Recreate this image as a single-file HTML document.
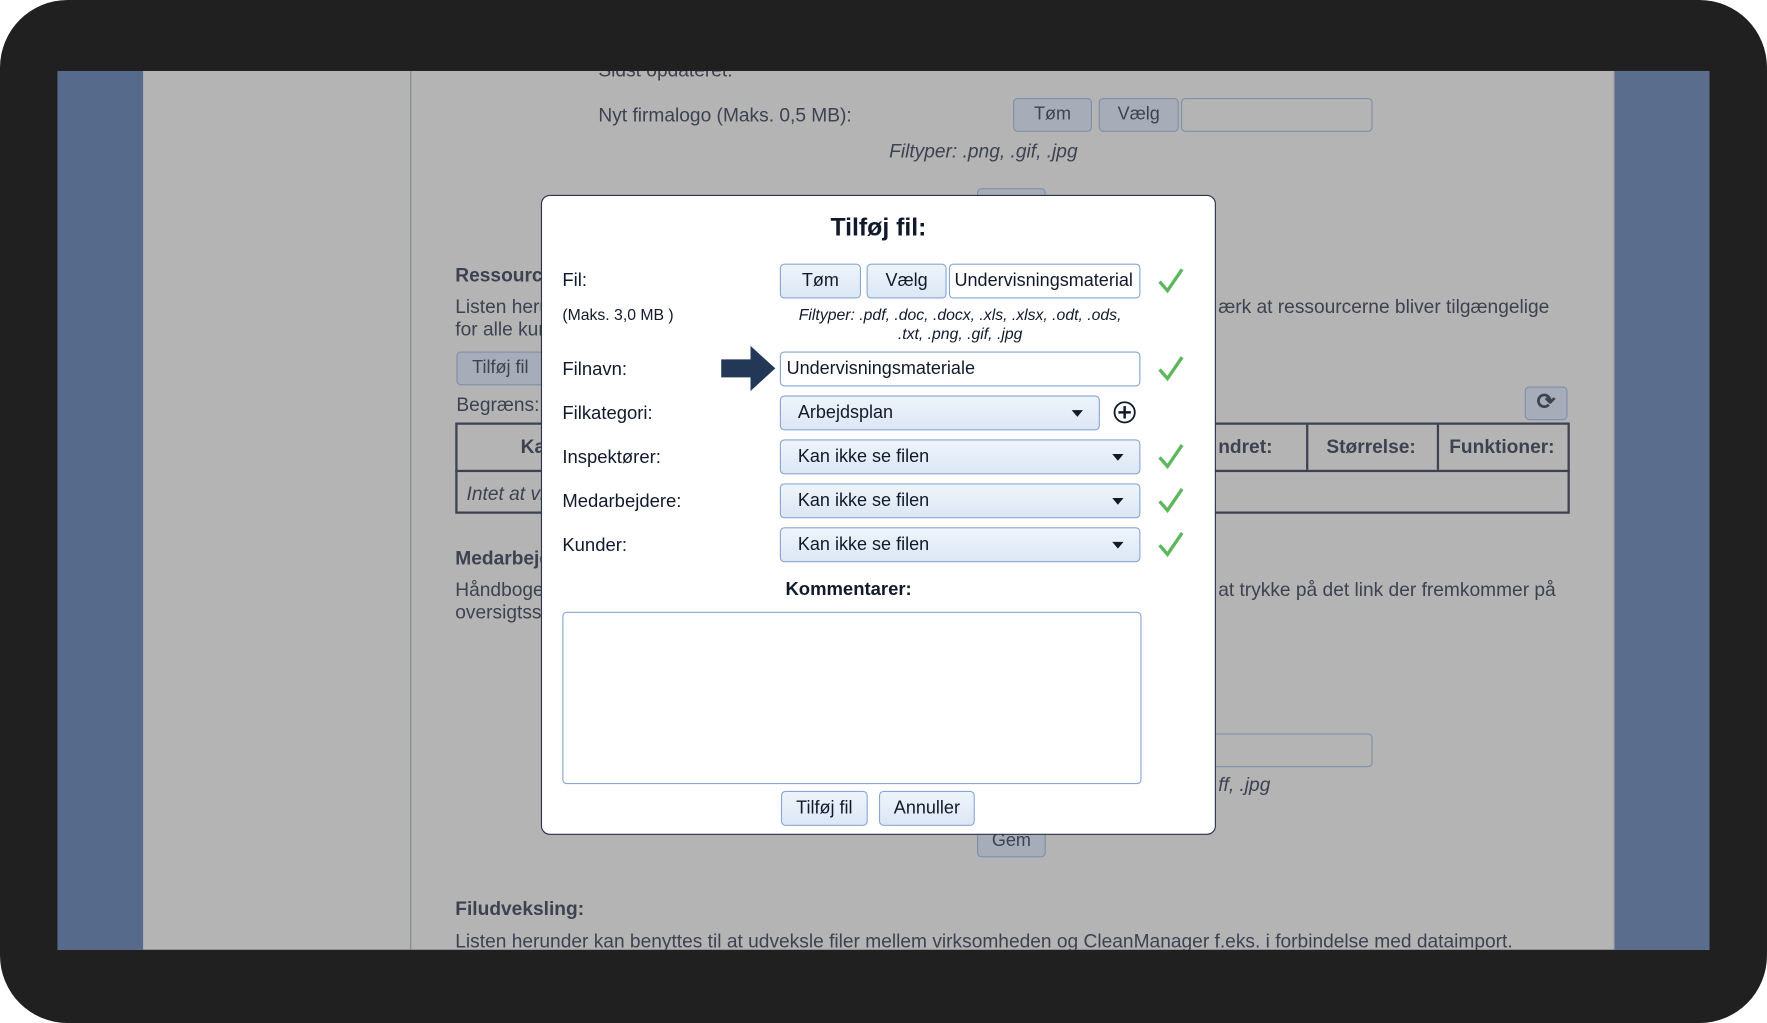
<!DOCTYPE html>
<html><head><meta charset="utf-8"><style>
html,body{margin:0;padding:0;width:1767px;height:1023px;overflow:hidden;background:#fff}
#w{position:absolute;left:0;top:0;width:1568px;height:908px;transform:scale(1.12691,1.12665);transform-origin:0 0;font-family:"Liberation Sans",sans-serif}
.a{position:absolute}
.frame{left:0;top:0;width:1568px;height:908px;background:#202020;border-radius:60px}
.scr{left:51px;top:63px;width:1466px;height:780px;background:#b4b4b4;overflow:hidden}
.t{position:absolute;color:#3c4250;font-size:17px;white-space:nowrap}
.b{font-weight:bold}
.gbtn{position:absolute;border:1px solid #7f8fa8;background:#a7adb8;border-radius:4px;color:#3c4250;font-size:16px;text-align:center;box-sizing:border-box}
.dlg{left:480px;top:173px;width:599px;height:568px;background:#fff;border:1.5px solid #2a3448;border-radius:8px;box-sizing:border-box}
.d{position:absolute;color:#111a2b;font-size:16.4px;white-space:nowrap}
.btn{position:absolute;box-sizing:border-box;border:1px solid #86a6d6;background:linear-gradient(#eef4fb,#dce7f5);border-radius:4px;color:#111a2b;font-size:16px;text-align:center}
.inp{position:absolute;box-sizing:border-box;border:1px solid #86a6d6;background:#fff;border-radius:4px;color:#111a2b;font-size:16px;padding-left:5px}
.sel{position:absolute;box-sizing:border-box;border:1px solid #86a6d6;background:linear-gradient(#eef4fb,#dce7f5);border-radius:4px;color:#111a2b;font-size:16px;padding-left:15px}
.sel:after{content:"";position:absolute;right:14px;top:12px;border-left:5px solid transparent;border-right:5px solid transparent;border-top:6px solid #111a2b}
.ck{position:absolute;width:24px;height:24px}
</style></head><body><div id="w">
<div class="a frame"></div>
<div class="a scr">
 <div class="a" style="left:0;top:0;width:76px;height:780px;background:#566b8b"></div>
 <div class="a" style="left:1382px;top:0;width:84px;height:780px;background:#5a6d8c"></div>
 <div class="a" style="left:313px;top:0;width:1px;height:780px;background:#7e8594"></div>
 <div class="a" style="left:1381px;top:0;width:1px;height:780px;background:#7e8594"></div>
 <div class="t" style="left:480px;top:-10px">Sidst opdateret:</div>
 <div class="t" style="left:480px;top:30px">Nyt firmalogo (Maks. 0,5 MB):</div>
 <div class="gbtn" style="left:848px;top:24px;width:70px;height:30px;line-height:28px">Tøm</div>
 <div class="gbtn" style="left:924px;top:24px;width:71px;height:30px;line-height:28px">Vælg</div>
 <div class="gbtn" style="left:997px;top:24px;width:170px;height:30px;background:#b4b4b4"></div>
 <div class="t" style="left:738px;top:62px;font-style:italic">Filtyper: .png, .gif, .jpg</div>
 <div class="t b" style="left:353px;top:172px">Ressourcer</div>
 <div class="t" style="left:353px;top:200px">Listen herunder</div>
 <div class="t" style="left:353px;top:220px">for alle kunder</div>
 <div class="t" style="left:1030px;top:200px">ærk at ressourcerne bliver tilgængelige</div>
 <div class="gbtn" style="left:354px;top:249px;width:78px;height:30px;line-height:28px">Tilføj fil</div>
 <div class="t" style="left:354px;top:287px">Begræns:</div>
 <div class="gbtn" style="left:1302px;top:280px;width:38px;height:30px;line-height:26px;font-size:20px;font-weight:bold">⟳</div>
 <div class="a" style="left:353px;top:312px;width:989px;height:81px;border:2px solid #3c4250;box-sizing:border-box"></div>
 <div class="a" style="left:353px;top:354px;width:989px;height:2px;background:#3c4250"></div>
 <div class="a" style="left:1108px;top:312px;width:2px;height:42px;background:#3c4250"></div>
 <div class="a" style="left:1224px;top:312px;width:2px;height:42px;background:#3c4250"></div>
 <div class="t b" style="left:411px;top:324px">Ka</div>
 <div class="t b" style="left:1030px;top:324px">ndret:</div>
 <div class="t b" style="left:1126px;top:324px">Størrelse:</div>
 <div class="t b" style="left:1235px;top:324px">Funktioner:</div>
 <div class="t" style="left:363px;top:366px;font-style:italic">Intet at vise</div>
 <div class="t b" style="left:353px;top:423px">Medarbejdere</div>
 <div class="t" style="left:353px;top:451px">Håndbogen</div>
 <div class="t" style="left:353px;top:471px">oversigtssiden</div>
 <div class="t" style="left:1030px;top:451px">at trykke på det link der fremkommer på</div>
 <div class="gbtn" style="left:997px;top:588px;width:170px;height:30px;background:#b4b4b4"></div>
 <div class="t" style="left:1030px;top:624px;font-style:italic">ff, .jpg</div>
 <div class="gbtn" style="left:816px;top:666px;width:61px;height:32px;line-height:34px">Gem</div>
 <div class="gbtn" style="left:816px;top:104px;width:61px;height:20px"></div>
 <div class="t b" style="left:353px;top:734px">Filudveksling:</div>
 <div class="t" style="left:353px;top:763px">Listen herunder kan benyttes til at udveksle filer mellem virksomheden og CleanManager f.eks. i forbindelse med dataimport.</div>
</div>
<div class="a dlg">
 <div class="d b" style="left:0;width:597px;text-align:center;top:15px;font-size:22px">Tilføj fil:</div>
 <div class="d" style="left:18px;top:66px">Fil:</div>
 <div class="d" style="left:18px;top:97px;font-size:14px">(Maks. 3,0 MB )</div>
 <div class="btn" style="left:211px;top:60px;width:72px;height:31px;line-height:29px">Tøm</div>
 <div class="btn" style="left:288px;top:60px;width:71px;height:31px;line-height:29px">Vælg</div>
 <div class="inp" style="left:361px;top:60px;width:170px;height:31px;line-height:29px;padding-left:4px">Undervisningsmaterial</div>
 <div class="d" style="left:200px;width:342px;text-align:center;top:97px;font-size:14px;font-style:italic;line-height:17px;white-space:normal">Filtyper: .pdf, .doc, .docx, .xls, .xlsx, .odt, .ods,<br>.txt, .png, .gif, .jpg</div>
 <div class="d" style="left:18px;top:145px">Filnavn:</div>
 <svg class="a" style="left:157px;top:131px" width="52" height="44"><path d="M2 14H28V2L50 22L28 42V30H2Z" fill="#233856"/></svg>
 <div class="inp" style="left:211px;top:138px;width:320px;height:31px;line-height:29px">Undervisningsmateriale</div>
 <div class="d" style="left:18px;top:184px">Filkategori:</div>
 <div class="sel" style="left:211px;top:177px;width:284px;height:31px;line-height:29px">Arbejdsplan</div>
 <svg class="a" style="left:506px;top:181px" width="22" height="22"><circle cx="11" cy="11" r="9" fill="none" stroke="#111a2b" stroke-width="1.6"/><path d="M11 5.5V16.5M5.5 11H16.5" stroke="#111a2b" stroke-width="2.2"/></svg>
 <div class="d" style="left:18px;top:223px">Inspektører:</div>
 <div class="sel" style="left:211px;top:216px;width:320px;height:31px;line-height:29px">Kan ikke se filen</div>
 <div class="d" style="left:18px;top:262px">Medarbejdere:</div>
 <div class="sel" style="left:211px;top:255px;width:320px;height:31px;line-height:29px">Kan ikke se filen</div>
 <div class="d" style="left:18px;top:301px">Kunder:</div>
 <div class="sel" style="left:211px;top:294px;width:320px;height:31px;line-height:29px">Kan ikke se filen</div>
 <svg class="ck" style="left:546px;top:63px"><path d="M2 13L9 21L22 2" fill="none" stroke="#5cb85c" stroke-width="3"/></svg>
 <svg class="ck" style="left:546px;top:141px"><path d="M2 13L9 21L22 2" fill="none" stroke="#5cb85c" stroke-width="3"/></svg>
 <svg class="ck" style="left:546px;top:219px"><path d="M2 13L9 21L22 2" fill="none" stroke="#5cb85c" stroke-width="3"/></svg>
 <svg class="ck" style="left:546px;top:258px"><path d="M2 13L9 21L22 2" fill="none" stroke="#5cb85c" stroke-width="3"/></svg>
 <svg class="ck" style="left:546px;top:297px"><path d="M2 13L9 21L22 2" fill="none" stroke="#5cb85c" stroke-width="3"/></svg>
 <div class="d b" style="left:216px;top:340px">Kommentarer:</div>
 <div class="inp" style="left:18px;top:369px;width:514px;height:153px"></div>
 <div class="btn" style="left:212px;top:528px;width:77px;height:31px;line-height:29px">Tilføj fil</div>
 <div class="btn" style="left:299px;top:528px;width:85px;height:31px;line-height:29px">Annuller</div>
</div>
</div></body></html>
